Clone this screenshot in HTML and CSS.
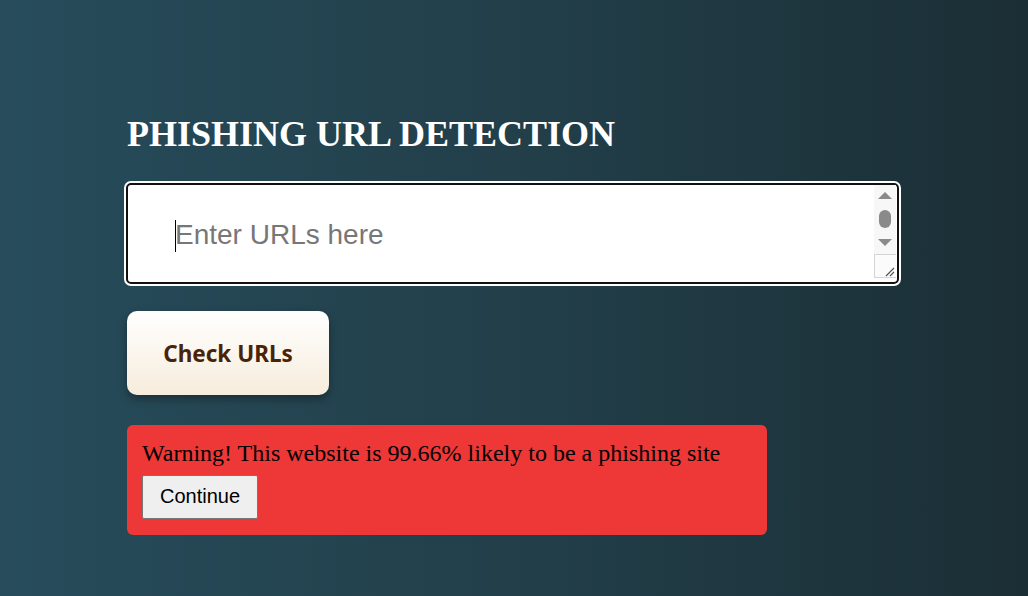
FILE: index.html
```html
<!DOCTYPE html>
<html lang="en">
<head>
<meta charset="utf-8">
<title>Phishing URL Detection</title>
<link rel="stylesheet" href="styles.css">
</head>
<body>
<main class="page">
  <h1 class="title">PHISHING URL DETECTION</h1>
  <div class="field">
    <textarea class="urls" placeholder="Enter URLs here" autofocus></textarea>
    <span class="caret" aria-hidden="true"></span>
    <svg class="scroll" width="22" height="93" viewBox="0 0 22 93" aria-hidden="true">
      <rect x="0" y="0" width="22" height="93" fill="#f7f7f7"/>
      <polygon points="11,7 18,14 4,14" fill="#8a8a8a"/>
      <rect x="5" y="25" width="12" height="18" rx="6" fill="#8a8a8a"/>
      <polygon points="4,54 18,54 11,61" fill="#8a8a8a"/>
      <rect x="0.5" y="69.5" width="22" height="23" fill="#fbfbfb" stroke="#d4d4d4"/>
      <path d="M20 83 L12 91 M20 87 L16 91" stroke="#555" stroke-width="1.2"/>
    </svg>
  </div>
  <button class="check" type="button">Check URLs</button>
  <div class="alert">
    <span class="alert-text">Warning! This website is 99.66% likely to be a phishing site</span>
    <button class="continue" type="button">Continue</button>
  </div>
</main>
</body>
</html>
```
FILE: styles.css
```css
html, body {
  margin: 0;
  height: 100%;
}
body {
  background: linear-gradient(to right, #274c5b 0%, #223f4a 50%, #1b2e35 100%);
  font-family: "Liberation Serif", "Times New Roman", serif;
  color: #000;
}
.page {
  padding: 113px 0 0 127px;
  display: flex;
  flex-direction: column;
  align-items: flex-start;
}
.title {
  margin: 0;
  font-size: 36px;
  font-weight: bold;
  color: #ffffff;
  line-height: 42px;
}
.field {
  position: relative;
  margin-top: 28px;
  margin-left: -1px;
}
.urls {
  display: block;
  box-sizing: border-box;
  width: 773px;
  height: 101px;
  padding: 34px 30px 20px 47px;
  border: 2px solid #111;
  border-radius: 5px;
  outline: 2px solid #ffffff;
  outline-offset: 0;
  background: #fff;
  font-family: "Liberation Sans", Arial, sans-serif;
  font-size: 28px;
  line-height: 32px;
  color: #222;
  resize: none;
  overflow: hidden;
  caret-color: #000;
}
.urls::placeholder {
  color: #777;
}
.caret {
  position: absolute;
  left: 49px;
  top: 37px;
  width: 1px;
  height: 32px;
  background: #000;
}
.scroll {
  position: absolute;
  top: 2px;
  right: 3px;
}
.check {
  margin-top: 27px;
  width: 202px;
  height: 84px;
  border: none;
  border-radius: 10px;
  background: linear-gradient(to bottom, #ffffff 0%, #f7ecdc 100%);
  box-shadow: 0 4px 8px rgba(0, 0, 0, 0.35);
  font-family: "Noto Sans", "Open Sans", sans-serif;
  font-weight: bold;
  font-size: 22.5px;
  color: #4a2208;
  cursor: pointer;
}
.alert {
  margin-top: 30px;
  box-sizing: border-box;
  width: 640px;
  padding: 14px 16px 16px 15px;
  background: #ee3737;
  border-radius: 6px;
  display: flex;
  flex-direction: column;
  align-items: flex-start;
  gap: 8px;
}
.alert-text {
  font-size: 24px;
  line-height: 28px;
}
.continue {
  font-family: "Liberation Sans", Arial, sans-serif;
  font-size: 20px;
  padding: 9px 17px 10px;
  background: #efefef;
  border: 1px solid #767676;
  border-radius: 2px;
  color: #000;
}
```
